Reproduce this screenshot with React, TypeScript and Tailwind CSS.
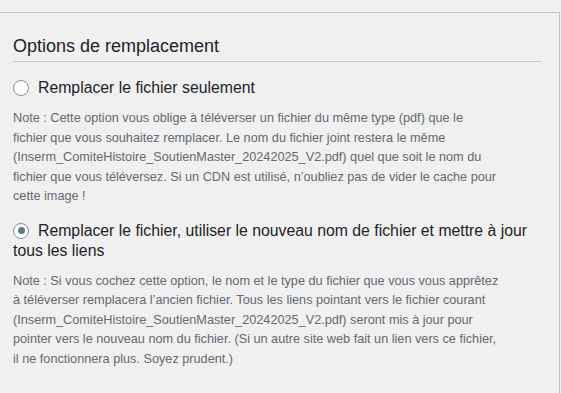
import React from "react";

function Radio({ checked }: { checked?: boolean }) {
  return (
    <span className="mt-[2px] flex h-4 w-4 shrink-0 items-center justify-center rounded-full border border-[#8c8f94] bg-white">
      {checked && <span className="h-[7px] w-[7px] rounded-full bg-[#5d7889]" />}
    </span>
  );
}

export default function App() {
  return (
    <div className="h-[393px] w-[561px] overflow-hidden bg-[#f0f0f0] pt-3 font-['Liberation_Sans',Arial,sans-serif]">
      <div className="h-full w-[560px] border-t border-r border-[#c3c4c7] pl-[13px] pr-[18px]">
        <h2 className="mt-[23px] border-b border-[#c8c9cc] pb-[5px] text-[18px] leading-5 text-[#1d2327]">
          Options de remplacement
        </h2>

        <label className="mt-[16px] flex gap-[9px] text-[15.8px] leading-5 text-[#1d2327]">
          <Radio />
          <span>Remplacer le fichier seulement</span>
        </label>
        <p className="mt-[11px] whitespace-nowrap text-[12.7px] leading-[19.5px] text-[#646970]">
          Note : Cette option vous oblige à téléverser un fichier du même type (pdf) que le
          <br />
          fichier que vous souhaitez remplacer. Le nom du fichier joint restera le même
          <br />
          (Inserm_ComiteHistoire_SoutienMaster_20242025_V2.pdf) quel que soit le nom du
          <br />
          fichier que vous téléversez. Si un CDN est utilisé, n’oubliez pas de vider le cache pour
          <br />
          cette image !
        </p>

        <label className="mt-[14px] flex gap-[9px] text-[15.8px] leading-5 text-[#1d2327]">
          <Radio checked />
          <span className="-ml-[25px] indent-[25px] whitespace-nowrap">
            Remplacer le fichier, utiliser le nouveau nom de fichier et mettre à jour
            <br />
            tous les liens
          </span>
        </label>
        <p className="mt-[11px] whitespace-nowrap text-[12.7px] leading-[19.5px] text-[#646970]">
          Note : Si vous cochez cette option, le nom et le type du fichier que vous vous apprêtez
          <br />
          à téléverser remplacera l’ancien fichier. Tous les liens pointant vers le fichier courant
          <br />
          (Inserm_ComiteHistoire_SoutienMaster_20242025_V2.pdf) seront mis à jour pour
          <br />
          pointer vers le nouveau nom du fichier. (Si un autre site web fait un lien vers ce fichier,
          <br />
          il ne fonctionnera plus. Soyez prudent.)
        </p>
      </div>
    </div>
  );
}
